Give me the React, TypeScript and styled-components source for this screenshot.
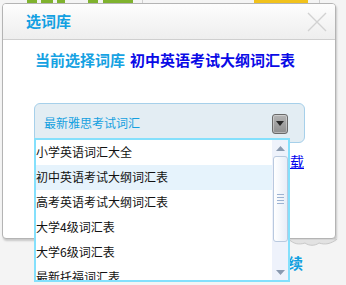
import React from "react";
import styled, { createGlobalStyle } from "styled-components";

const Global = createGlobalStyle`
  html, body { margin: 0; padding: 0; background: #f4f4f4; }
  body { font-family: "Noto Sans CJK SC", "Noto Sans", sans-serif; }
  * { box-sizing: border-box; }
`;

const Page = styled.div`
  position: relative;
  width: 346px;
  height: 285px;
  overflow: hidden;
  background: #f4f4f4;
`;

const Strip = styled.div`
  height: 3px;
  display: flex;
`;

const Seg = styled.div<{ $w: number; $ml: number; $c: string }>`
  width: ${(p) => p.$w}px;
  margin-left: ${(p) => p.$ml}px;
  background: ${(p) => p.$c};
  flex: none;
`;

const Dialog = styled.div`
  margin-left: 2px;
  width: 334px;
  height: 236px;
  border: 1px solid #b4b4b4;
  border-radius: 4px;
  background: #fff;
  box-shadow: 1px 2px 2px rgba(0, 0, 0, 0.18);
  display: flex;
  flex-direction: column;
  overflow: hidden;
`;

const Header = styled.div`
  height: 36px;
  flex: none;
  display: flex;
  align-items: center;
  justify-content: space-between;
  padding: 0 8px 0 23px;
  background: linear-gradient(#fdfdfd, #eeeeee);
  border-bottom: 1px solid #cfcfcf;
`;

const Title = styled.div`
  font-size: 15px;
  font-weight: 700;
  color: #12a0e2;
  line-height: 20px;
  margin-top: -2px;
`;

const Body = styled.div`
  padding: 10px 31px 0 31px;
  display: flex;
  flex-direction: column;
`;

const CurrentLine = styled.div`
  height: 20px;
  line-height: 20px;
  margin-left: 1px;
  display: flex;
  gap: 5px;
  font-size: 15px;
  font-weight: 700;
  white-space: nowrap;
`;

const Label = styled.span`
  color: #16a2e2;
`;

const Current = styled.span`
  color: #0a0ae6;
`;

const Select = styled.div`
  margin-top: 33px;
  width: 271px;
  height: 40px;
  border: 1px solid #a6d0ea;
  border-radius: 6px;
  background: #e3edf3;
  display: flex;
  align-items: center;
  justify-content: space-between;
  padding: 0 16px 0 9px;
`;

const SelectText = styled.span`
  font-size: 12px;
  color: #14a0e0;
  line-height: 16px;
`;

const DropBtn = styled.div`
  width: 16px;
  height: 20px;
  margin-top: 1px;
  border: 1px solid #6a6a6a;
  border-radius: 3px;
  background: linear-gradient(#b4b4b4, #8e8e8e);
  box-shadow: inset 0 0 0 1px rgba(255, 255, 255, 0.35);
  display: flex;
  align-items: center;
  justify-content: center;
`;

const LinkRow = styled.div`
  margin-top: 11px;
  display: flex;
  justify-content: flex-end;
`;

const Link = styled.a`
  font-size: 14px;
  line-height: 14px;
  color: #0000ee;
  text-decoration: underline;
`;

const CurlRow = styled.div`
  height: 9px;
  display: flex;
  justify-content: flex-end;
  padding-right: 9px;
`;

const ContinueRow = styled.div`
  margin-top: 7px;
  display: flex;
  justify-content: flex-end;
  padding-right: 43px;
`;

const Continue = styled.span`
  font-size: 15px;
  font-weight: 700;
  line-height: 16px;
  color: #12a0e0;
`;

const List = styled.div`
  position: absolute;
  left: 34px;
  top: 138px;
  width: 256px;
  height: 144px;
  border: 2px solid #84e0fc;
  background: #fff;
  display: flex;
  overflow: hidden;
`;

const Items = styled.div`
  flex: 1;
  display: flex;
  flex-direction: column;
`;

const Item = styled.div<{ $active?: boolean }>`
  height: 25px;
  flex: none;
  line-height: 24px;
  font-size: 12px;
  color: #111;
  white-space: nowrap;
  background: ${(p) => (p.$active ? "#e6f3fc" : "#fff")};
`;

const Scrollbar = styled.div`
  width: 16px;
  flex: none;
  background: #eef2fb;
  display: flex;
  flex-direction: column;
  align-items: center;
`;

const Arrow = styled.div`
  height: 16px;
  flex: none;
  display: flex;
  align-items: center;
  justify-content: center;
`;

const Thumb = styled.div`
  width: 15px;
  height: 86px;
  flex: none;
  border: 1px solid #b9c9df;
  border-radius: 3px;
  background: linear-gradient(90deg, #ffffff, #e8eef8);
  display: flex;
  flex-direction: column;
  align-items: center;
  justify-content: center;
  gap: 2px;
`;

const Grip = styled.div`
  width: 7px;
  height: 1px;
  background: #9cb2d2;
`;

const Track = styled.div`
  flex: 1;
`;

const items = [
  "小学英语词汇大全",
  "初中英语考试大纲词汇表",
  "高考英语考试大纲词汇表",
  "大学4级词汇表",
  "大学6级词汇表",
  "最新托福词汇表",
];

export default function App() {
  return (
    <>
      <Global />
      <Page>
        <Strip>
          <Seg $w={10} $ml={27} $c="#7fb22e" />
          <Seg $w={12} $ml={4} $c="#7fb22e" />
          <Seg $w={8} $ml={4} $c="#7fb22e" />
          <Seg $w={10} $ml={23} $c="#7fb22e" />
          <Seg $w={30} $ml={5} $c="#7fb22e" />
          <Seg $w={1} $ml={9} $c="#cfcfcf" />
          <Seg $w={54} $ml={111} $c="#f1c21c" />
          <Seg $w={1} $ml={11} $c="#cfcfcf" />
        </Strip>
        <Dialog>
          <Header>
            <Title>选词库</Title>
            <svg width="20" height="20" viewBox="0 0 20 20">
              <path d="M1 1 L19 19 M19 1 L1 19" stroke="#d2d2d2" strokeWidth="1.4" fill="none" />
            </svg>
          </Header>
          <Body>
            <CurrentLine>
              <Label>当前选择词库</Label>
              <Current>初中英语考试大纲词汇表</Current>
            </CurrentLine>
            <Select>
              <SelectText>最新雅思考试词汇</SelectText>
              <DropBtn>
                <svg width="8" height="5" viewBox="0 0 8 5">
                  <path d="M0 0 H8 L4 5 Z" fill="#2a2a2a" />
                </svg>
              </DropBtn>
            </Select>
            <LinkRow>
              <Link href="#">下载</Link>
            </LinkRow>
          </Body>
        </Dialog>
        <CurlRow>
          <svg width="48" height="9" viewBox="0 0 48 9">
            <path
              d="M0 0 C4 5 10 6 16 4 C20 7 26 7 30 4 C36 6 42 5 48 0 Z"
              fill="#e2e2e2"
              stroke="#c8c8c8"
              strokeWidth="1"
            />
          </svg>
        </CurlRow>
        <ContinueRow>
          <Continue>继续</Continue>
        </ContinueRow>
        <List>
          <Items>
            {items.map((t, i) => (
              <Item key={t} $active={i === 1}>
                {t}
              </Item>
            ))}
          </Items>
          <Scrollbar>
            <Arrow>
              <svg width="9" height="5" viewBox="0 0 9 5">
                <path d="M4.5 0 L9 5 H0 Z" fill="#8a9ab0" />
              </svg>
            </Arrow>
            <Thumb>
              <Grip />
              <Grip />
              <Grip />
              <Grip />
            </Thumb>
            <Track />
            <Arrow>
              <svg width="9" height="5" viewBox="0 0 9 5">
                <path d="M0 0 H9 L4.5 5 Z" fill="#8a9ab0" />
              </svg>
            </Arrow>
          </Scrollbar>
        </List>
      </Page>
    </>
  );
}
